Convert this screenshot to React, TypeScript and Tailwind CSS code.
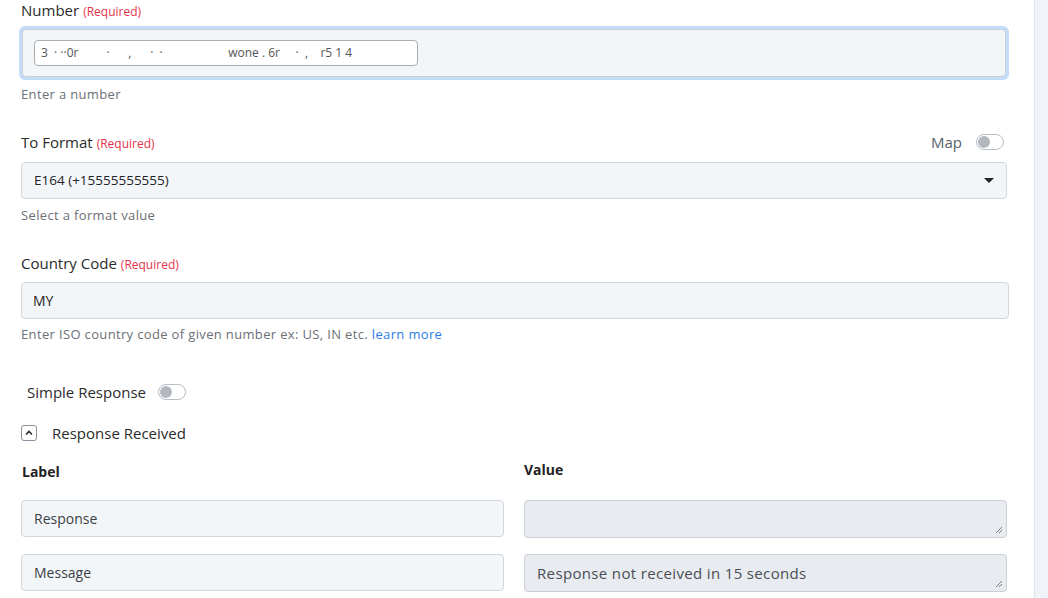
type FieldLabelProps = {
  text: string
  required?: boolean
}

function FieldLabel({ text, required }: FieldLabelProps) {
  return (
    <div className="flex h-[20px] items-baseline gap-1 overflow-visible text-[15px] leading-[20px] text-[#2b2b2b]">
      <span className="leading-[20px]">{text}</span>
      {required && <span className="text-[12px] leading-[20px] text-[#e5334b]">(Required)</span>}
    </div>
  )
}

function Help({ children, className }: { children: React.ReactNode; className: string }) {
  return (
    <div className={`h-[18px] text-[13px] leading-[18px] tracking-[0.35px] text-[#6b6f76] ${className}`}>
      {children}
    </div>
  )
}

function Toggle() {
  return (
    <div className="flex h-[16px] w-[28px] items-center rounded-full border border-[#b9bec6] bg-white px-[1px]">
      <div className="h-[12px] w-[12px] rounded-full bg-[#b3b8bf]" />
    </div>
  )
}

function Resize() {
  return (
    <svg width="8" height="8" viewBox="0 0 8 8" className="absolute bottom-[3px] right-[3px]">
      <path d="M7 1L1 7M7 4L4 7" stroke="#7b7f86" strokeWidth="1" />
    </svg>
  )
}

export default function App() {
  return (
    <div
      className="flex h-[598px] w-[1048px] overflow-hidden bg-white"
      style={{ fontFamily: '"Open Sans", "Noto Sans", sans-serif' }}
    >
      <div className="flex flex-1 flex-col pl-[21px] pr-[25px]">
        {/* Number */}
        <FieldLabel text="Number" required />
        <div className="mt-[6px] -ml-[2px] h-[54px] rounded-[6px] bg-[#c3dcf8] p-[3px]">
          <div className="flex h-[48px] items-center rounded-[4px] border border-[#ccd0d6] bg-[#f3f6f9] pl-[11px]">
            {/* mapped value chip, contents masked */}
            <div className="flex h-[26px] w-[384px] items-center overflow-hidden rounded-[4px] border border-[#a9acb1] bg-white pl-[6px]">
              <span className="whitespace-nowrap text-[12px] leading-[14px] text-[#555]">
                3&nbsp;&nbsp;· ··0r&nbsp;&nbsp;&nbsp;&nbsp;&nbsp;&nbsp;&nbsp;&nbsp;&nbsp;·&nbsp;&nbsp;&nbsp;&nbsp;&nbsp;&nbsp;,&nbsp;&nbsp;&nbsp;&nbsp;&nbsp;&nbsp;·&nbsp;&nbsp;·&nbsp;&nbsp;&nbsp;&nbsp;&nbsp;&nbsp;&nbsp;&nbsp;&nbsp;&nbsp;&nbsp;&nbsp;&nbsp;&nbsp;&nbsp;&nbsp;&nbsp;&nbsp;&nbsp;&nbsp;&nbsp;wone . 6r&nbsp;&nbsp;&nbsp;&nbsp;&nbsp;·&nbsp;&nbsp;,&nbsp;&nbsp;&nbsp;&nbsp;r5 1 4
              </span>
            </div>
          </div>
        </div>
        <Help className="mt-[5px]">Enter a number</Help>

        {/* To Format */}
        <div className="mt-[29px] flex h-[20px] items-center justify-between pr-[5px]">
          <FieldLabel text="To Format" required />
          <div className="flex items-center gap-[14px]">
            <span className="text-[15px] leading-[20px] text-[#5b6168]">Map</span>
            <Toggle />
          </div>
        </div>
        <div className="mt-[10px] mr-[2px] flex h-[37px] shrink-0 items-center justify-between rounded-[4px] border border-[#d3d7dc] bg-[#f3f6f9] px-[12px]">
          <span className="text-[13.5px] text-[#1f2328]">E164 (+15555555555)</span>
          <svg width="10" height="6" viewBox="0 0 10 6">
            <path d="M0 0h10L5 5z" fill="#1f2328" />
          </svg>
        </div>
        <Help className="mt-[7px]">Select a format value</Help>

        {/* Country Code */}
        <div className="mt-[29px]">
          <FieldLabel text="Country Code" required />
        </div>
        <div className="mt-[9px] flex h-[37px] shrink-0 items-center rounded-[4px] border border-[#d3d7dc] bg-[#f3f6f9] pl-[11px]">
          <span className="text-[14px] text-[#1f2328]">MY</span>
        </div>
        <Help className="mt-[6px]">
          Enter ISO country code of given number ex: US, IN etc.{' '}
          <span className="text-[#2b7de9]">learn more</span>
        </Help>

        {/* Simple Response */}
        <div className="mt-[39px] flex h-[20px] items-center gap-[12px] pl-[6px]">
          <span className="text-[15px] leading-[20px] text-[#2b2b2b]">Simple Response</span>
          <Toggle />
        </div>

        {/* Response Received */}
        <div className="mt-[21px] flex h-[20px] items-center gap-[15px]">
          <div className="flex h-[16px] w-[16px] items-center justify-center rounded-[3px] border border-[#8a9099]">
            <svg width="8" height="6" viewBox="0 0 8 6">
              <path d="M1 4.5L4 1.5L7 4.5" stroke="#2b2b2b" strokeWidth="1.6" fill="none" />
            </svg>
          </div>
          <span className="text-[15px] leading-[20px] text-[#2b2b2b]">Response Received</span>
        </div>

        {/* Label / Value table */}
        <div className="mt-[19px] grid grid-cols-2 gap-x-[20px] pr-[2px]">
          <div className="h-[20px] pl-[1px] text-[14px] font-bold leading-[20px] text-[#222]">Label</div>
          <div className="-mt-[2px] h-[20px] text-[14px] font-bold leading-[20px] text-[#222]">Value</div>

          <div className="mt-[18px] flex h-[37px] items-center rounded-[4px] border border-[#d3d7dc] bg-[#f3f6f9] pl-[12px]">
            <span className="text-[14px] text-[#3a3f45]">Response</span>
          </div>
          <div className="relative mt-[18px] h-[38px] rounded-[4px] border border-[#ccd0d6] bg-[#e8ebef]">
            <Resize />
          </div>

          <div className="mt-[16px] flex h-[37px] items-center rounded-[4px] border border-[#d3d7dc] bg-[#f3f6f9] pl-[12px]">
            <span className="text-[14px] text-[#3a3f45]">Message</span>
          </div>
          <div className="relative mt-[16px] flex h-[38px] items-center rounded-[4px] border border-[#ccd0d6] bg-[#e8ebef] pl-[12px]">
            <span className="text-[15px] tracking-[0.35px] text-[#4a4f55]">Response not received in 15 seconds</span>
            <Resize />
          </div>
        </div>
      </div>

      {/* right rail */}
      <div className="w-[14px] border-l border-[#dde5f2] bg-[#f0f3f8]" />
    </div>
  )
}
